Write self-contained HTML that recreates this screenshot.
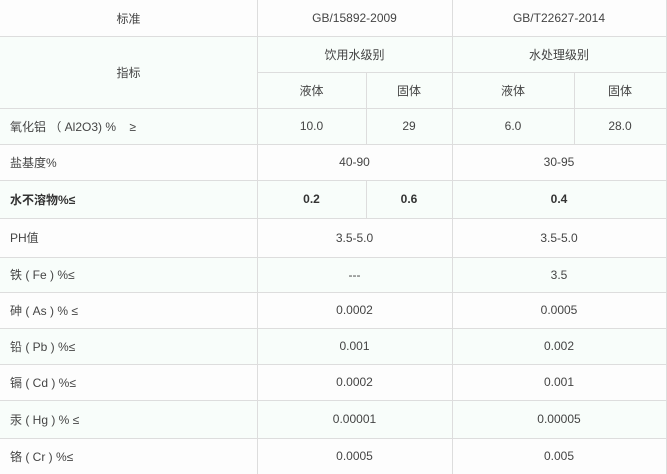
<!DOCTYPE html>
<html><head><meta charset="utf-8"><style>
body{margin:0;width:667px;height:474px;background:#fff;overflow:hidden;position:relative;font-family:"Liberation Sans","Noto Sans CJK SC",sans-serif;font-size:12px;color:#444;}
.r{position:absolute;left:0;width:666px;box-sizing:border-box;}
.c{position:absolute;display:flex;align-items:center;justify-content:center;box-sizing:border-box;border-right:1px solid #ddd;border-bottom:1px solid #ddd;}
.l{justify-content:flex-start;padding-left:10px;}
.b{font-weight:bold;color:#333;}
</style></head><body>
<div class="r" style="top:0;height:36px;background:#fdfdfd"></div>
<div class="r" style="top:36px;height:72px;background:#f8fdfa"></div>
<div class="r" style="top:108px;height:36px;background:#f8fdfa"></div>
<div class="r" style="top:144px;height:36px;background:#fdfdfd"></div>
<div class="r" style="top:180px;height:38px;background:#f8fdfa"></div>
<div class="r" style="top:218px;height:39px;background:#fdfdfd"></div>
<div class="r" style="top:257px;height:35px;background:#f8fdfa"></div>
<div class="r" style="top:292px;height:36px;background:#fdfdfd"></div>
<div class="r" style="top:328px;height:36px;background:#f8fdfa"></div>
<div class="r" style="top:364px;height:36px;background:#fdfdfd"></div>
<div class="r" style="top:400px;height:38px;background:#f8fdfa"></div>
<div class="r" style="top:438px;height:36px;background:#fdfdfd"></div>

<div class="c" style="left:0;top:0;width:258px;height:37px">标准</div>
<div class="c" style="left:257px;top:0;width:196px;height:37px">GB/15892-2009</div>
<div class="c" style="left:452px;top:0;width:215px;height:37px">GB/T22627-2014</div>

<div class="c" style="left:0;top:36px;width:258px;height:73px">指标</div>
<div class="c" style="left:257px;top:36px;width:196px;height:37px">饮用水级别</div>
<div class="c" style="left:452px;top:36px;width:215px;height:37px">水处理级别</div>
<div class="c" style="left:257px;top:72px;width:110px;height:37px">液体</div>
<div class="c" style="left:366px;top:72px;width:87px;height:37px">固体</div>
<div class="c" style="left:452px;top:72px;width:123px;height:37px">液体</div>
<div class="c" style="left:574px;top:72px;width:93px;height:37px">固体</div>

<div class="c l" style="left:0;top:108px;width:258px;height:37px">氧化铝 （ Al2O3) % &nbsp; &nbsp;≥</div>
<div class="c" style="left:257px;top:108px;width:110px;height:37px">10.0</div>
<div class="c" style="left:366px;top:108px;width:87px;height:37px">29</div>
<div class="c" style="left:452px;top:108px;width:123px;height:37px">6.0</div>
<div class="c" style="left:574px;top:108px;width:93px;height:37px">28.0</div>

<div class="c l" style="left:0;top:144px;width:258px;height:37px">盐基度%</div>
<div class="c" style="left:257px;top:144px;width:196px;height:37px">40-90</div>
<div class="c" style="left:452px;top:144px;width:215px;height:37px">30-95</div>

<div class="c l b" style="left:0;top:180px;width:258px;height:39px">水不溶物%≤</div>
<div class="c b" style="left:257px;top:180px;width:110px;height:39px">0.2</div>
<div class="c b" style="left:366px;top:180px;width:87px;height:39px">0.6</div>
<div class="c b" style="left:452px;top:180px;width:215px;height:39px">0.4</div>

<div class="c l" style="left:0;top:218px;width:258px;height:40px">PH值</div>
<div class="c" style="left:257px;top:218px;width:196px;height:40px">3.5-5.0</div>
<div class="c" style="left:452px;top:218px;width:215px;height:40px">3.5-5.0</div>

<div class="c l" style="left:0;top:257px;width:258px;height:36px">铁 ( Fe ) %≤</div>
<div class="c" style="left:257px;top:257px;width:196px;height:36px">---</div>
<div class="c" style="left:452px;top:257px;width:215px;height:36px">3.5</div>

<div class="c l" style="left:0;top:292px;width:258px;height:37px">砷 ( As ) % ≤</div>
<div class="c" style="left:257px;top:292px;width:196px;height:37px">0.0002</div>
<div class="c" style="left:452px;top:292px;width:215px;height:37px">0.0005</div>

<div class="c l" style="left:0;top:328px;width:258px;height:37px">铅 ( Pb ) %≤</div>
<div class="c" style="left:257px;top:328px;width:196px;height:37px">0.001</div>
<div class="c" style="left:452px;top:328px;width:215px;height:37px">0.002</div>

<div class="c l" style="left:0;top:364px;width:258px;height:37px">镉 ( Cd ) %≤</div>
<div class="c" style="left:257px;top:364px;width:196px;height:37px">0.0002</div>
<div class="c" style="left:452px;top:364px;width:215px;height:37px">0.001</div>

<div class="c l" style="left:0;top:400px;width:258px;height:39px">汞 ( Hg ) % ≤</div>
<div class="c" style="left:257px;top:400px;width:196px;height:39px">0.00001</div>
<div class="c" style="left:452px;top:400px;width:215px;height:39px">0.00005</div>

<div class="c l" style="left:0;top:438px;width:258px;height:36px;border-bottom:none">铬 ( Cr ) %≤</div>
<div class="c" style="left:257px;top:438px;width:196px;height:36px;border-bottom:none">0.0005</div>
<div class="c" style="left:452px;top:438px;width:215px;height:36px;border-bottom:none">0.005</div>
</body></html>
